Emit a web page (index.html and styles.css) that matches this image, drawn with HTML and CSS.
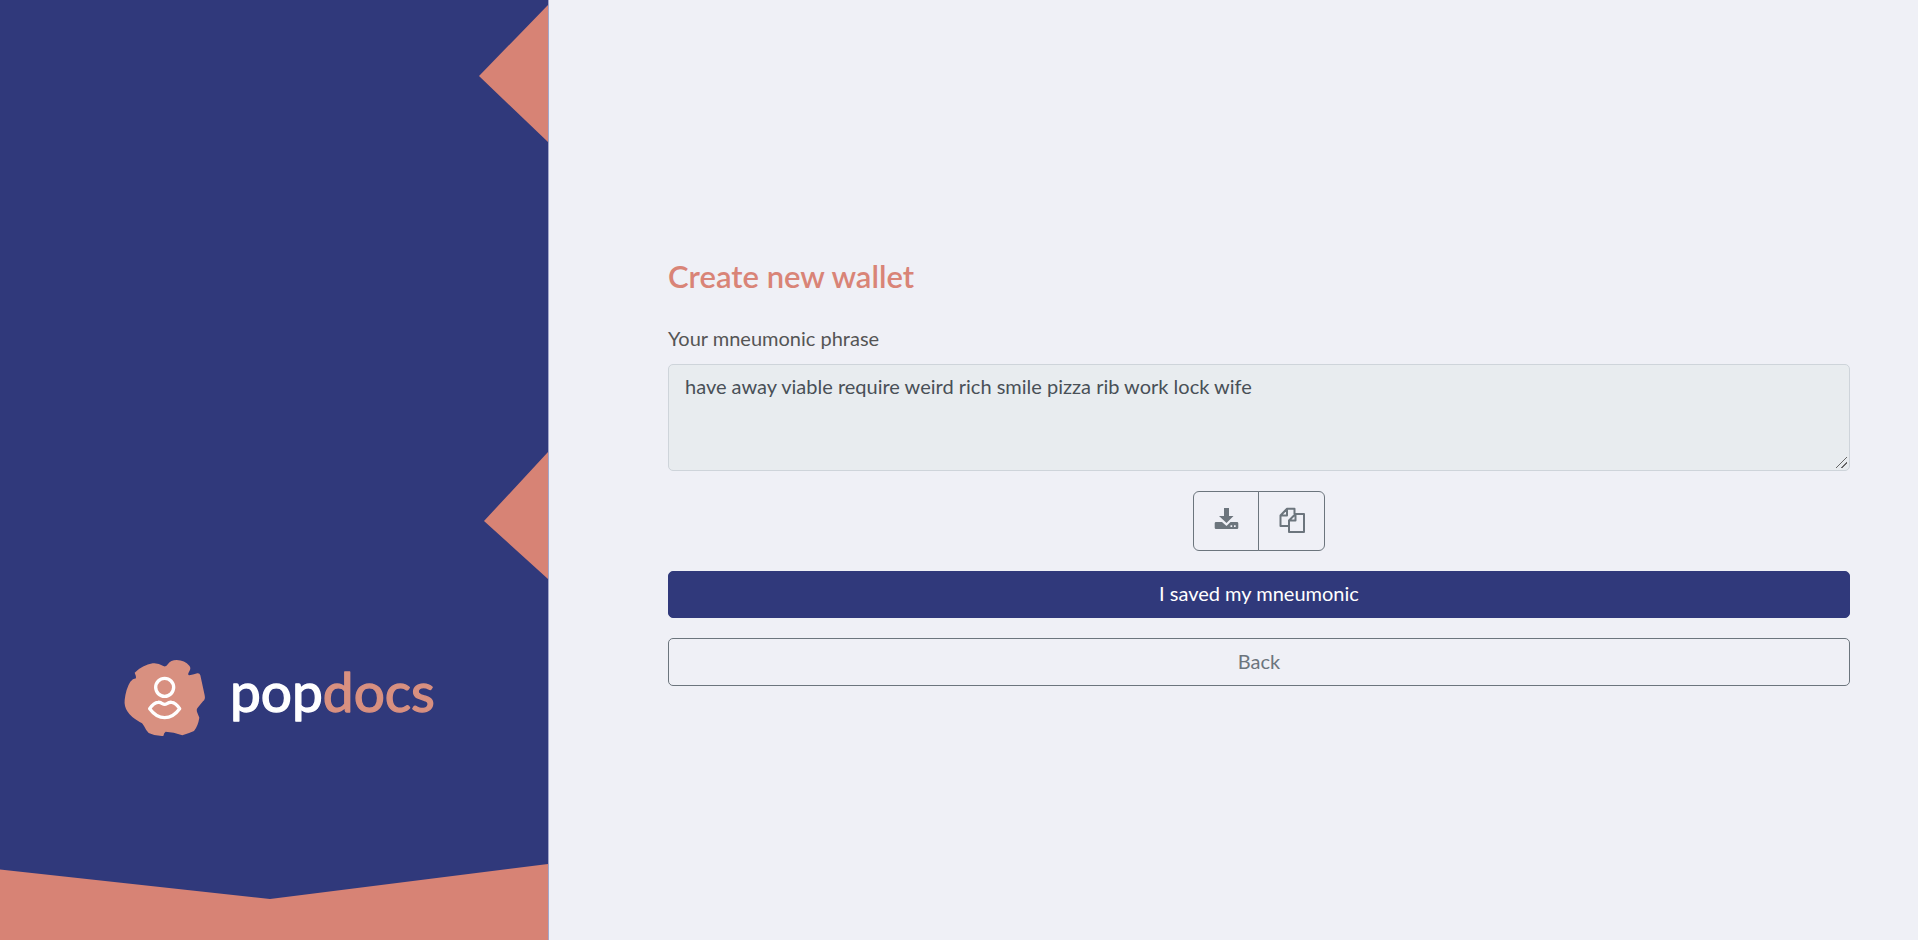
FILE: index.html
```html
<!DOCTYPE html>
<html lang="en">
<head>
<meta charset="utf-8">
<meta name="viewport" content="width=device-width, initial-scale=1">
<title>Create new wallet – popdocs</title>
<link rel="stylesheet" href="styles.css">
</head>
<body>
<div class="page">
  <aside class="brand">
    <svg class="brand-art" viewBox="0 0 548 940" preserveAspectRatio="none" aria-hidden="true">
      <path d="M548 5L479 76l69 66zM548 452l-64 69 64 58zM0 869.500L270 899l278-35v76H0z"/>
    </svg>
    <svg class="logo" viewBox="72 45 948 258" role="img" aria-label="popdocs">
      <path class="blob" d="M104 98Q128 75 158 70Q174 68 190 78Q198 82 204 72Q212 60 230 60Q254 61 268 77Q274 84 268 94Q261 105 268 106Q278 105 292 100Q299 99 301 106L314 166Q317 178 309 184L293 203Q288 208 292 218L298 233Q294 258 282 273Q264 281 247 286Q220 276 197 275Q192 278 190 288Q166 289 146 279Q138 271 132 258Q127 248 119 246Q92 231 82 214Q72 198 74 180Q78 145 91 125Q98 116 108 115Q108 106 104 98Z"/>
      <ellipse class="figure" cx="194" cy="142" rx="27" ry="27"/>
      <path class="figure" d="M149 206Q161 188 174 187Q181 186 187 191Q194 195 201 191Q208 186 215 187Q227 188 239 206Q219 233 194 233Q169 233 149 206Z"/>
      <text class="word" x="390" y="216"><tspan class="word-pop">pop</tspan><tspan class="word-docs">docs</tspan></text>
    </svg>
  </aside>
  <main class="content">
    <form class="wallet">
      <h1 class="title">Create new wallet</h1>
      <label class="label" for="phrase">Your mneumonic phrase</label>
      <textarea class="phrase" id="phrase" rows="3" readonly>have away viable require weird rich smile pizza rib work lock wife</textarea>
      <div class="tools">
        <button class="tool" type="button" aria-label="Download">
          <svg class="icon" viewBox="0 0 26 26" aria-hidden="true"><path fill-rule="evenodd" d="M11 0h5v8h4.500L13.500 15 6 8h5zM3 14h6l4.500 4 4-4H24q1.300 0 1.300 1.300v4.500q0 1.200-1.300 1.200H3q-1.300 0-1.300-1.200v-4.500Q1.700 14 3 14zM17.500 17.300v1.700h1.700v-1.700zm3.500 0v1.700h1.700v-1.700z"/></svg>
        </button>
        <button class="tool" type="button" aria-label="Copy">
          <svg class="icon icon-line" viewBox="0 0 26 26" aria-hidden="true"><path d="M10 18H1.500V7.500L8 .8h7.500V6M8 .8v6.700H1.500M16.500 6H25v18H10V12.500zM16.500 6v6.500H10"/></svg>
        </button>
      </div>
      <button class="btn btn-primary" type="button">I saved my mneumonic</button>
      <button class="btn btn-outline" type="button">Back</button>
    </form>
  </main>
</div>
</body>
</html>
```
FILE: styles.css
```css
* { box-sizing: border-box; }

body {
  margin: 0;
  background: #eff0f6;
  color: #555;
  font-family: Lato, "Open Sans", sans-serif;
  font-size: 20px;
  line-height: 30px;
}

.page {
  display: grid;
  grid-template-columns: 2fr 5fr;
  min-height: 100vh;
}

.brand {
  position: relative;
  display: flex;
  align-items: flex-end;
  padding: 0 20% 199px 124px;
  background: #30397b;
}

.brand-art {
  position: absolute;
  inset: 0;
  width: 100%;
  height: 100%;
  fill: #d78375;
}

.logo {
  position: relative;
  flex: none;
  width: 316px;
  height: 86px;
}

.blob { fill: #d89080; }

.figure {
  fill: none;
  stroke: #fff;
  stroke-width: 10;
  stroke-linejoin: round;
}

.word {
  font-size: 165px;
  font-weight: 400;
  stroke-width: 4;
  stroke-linejoin: round;
}

.word-pop { fill: #fff; stroke: #fff; }
.word-docs { fill: #d89080; stroke: #d89080; }

.content {
  display: flex;
  align-items: center;
  padding: 20px 68px 22px 119px;
  border-left: 1px solid #a3a7cb;
}

.wallet {
  display: flex;
  flex: 1;
  flex-direction: column;
}

.title {
  margin: 0 0 24px;
  color: #d98477;
  font-size: 31px;
  font-weight: 600;
  line-height: 46px;
}

.label { margin-bottom: 11px; }

.phrase {
  width: 100%;
  height: 107px;
  margin: 0 0 20px;
  padding: 6px 16px;
  border: 1px solid #ced4da;
  border-radius: 5px;
  background: #e8ecef;
  color: #495057;
  font: inherit;
  resize: vertical;
}

.phrase::-webkit-resizer {
  background: linear-gradient(135deg, transparent 46%, #666 46%, #666 52%, transparent 52%, transparent 72%, #666 72%, #666 78%, transparent 78%) 2px 2px / 11px 11px no-repeat;
}

.tools {
  display: flex;
  align-self: center;
  margin-bottom: 20px;
}

.tool {
  display: flex;
  align-items: center;
  justify-content: center;
  width: 66px;
  height: 60px;
  padding: 0;
  border: 1px solid #6c757d;
  border-radius: 6px 0 0 6px;
  background: transparent;
  color: #6c757d;
}

.tool + .tool {
  width: 67px;
  margin-left: -1px;
  border-radius: 0 6px 6px 0;
}

.icon {
  width: 26px;
  height: 26px;
  fill: currentColor;
}

.icon-line {
  overflow: visible;
  fill: none;
  stroke: currentColor;
  stroke-width: 2;
  stroke-linejoin: round;
}

.btn {
  height: 48px;
  padding: 0 16px 2px;
  border: 1px solid #6c757d;
  border-radius: 5px;
  background: transparent;
  color: #6c757d;
  font: inherit;
}

.btn-primary {
  height: 47px;
  margin-bottom: 20px;
  border-color: #30397b;
  background: #30397b;
  color: #fff;
}
```
